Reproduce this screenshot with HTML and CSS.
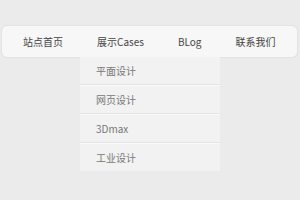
FILE: index.html
```html
<!DOCTYPE html>
<html lang="zh-CN">
<head>
    <meta charset="UTF-8">
    <title>导航菜单</title>
    <link rel="stylesheet" href="styles.css">
</head>
<body>
    <ul class="nav">
        <li><a href="#">站点首页</a></li>
        <li><a href="#">展示Cases</a></li>
        <li><a href="#">BLog</a></li>
        <li><a href="#">联系我们</a></li>
    </ul>
    <ul class="sub">
        <li><a href="#">平面设计</a></li>
        <li><a href="#">网页设计</a></li>
        <li><a href="#">3Dmax</a></li>
        <li><a href="#">工业设计</a></li>
    </ul>
</body>
</html>
```

FILE: styles.css
```css
body {
    margin: 0;
    padding: 26px 3px 0 2px;
    background-color: #ebebeb;
    font-family: "Noto Sans CJK SC", "Noto Sans", sans-serif;
    font-size: 10px;
}

ul {
    list-style: none;
    margin: 0;
    padding: 0;
}

.nav {
    display: flex;
    height: 31px;
    padding: 0 0 0 4px;
    background-color: #f7f7f7;
    border-radius: 5px;
    box-shadow: 0 0 2px rgba(0, 0, 0, 0.12);
}

    .nav li {
        flex: none;
    }

    .nav a {
        display: block;
        padding: 0 17px;
        line-height: 31px;
        white-space: nowrap;
        color: #444;
        text-decoration: none;
    }

/* submenu of 展示Cases, sits right under its tab */
.sub {
    width: 140px;
    margin-left: 78px;
    background-color: #f2f2f2;
}

    .sub li {
        border-top: 1px solid #fafafa;
        border-bottom: 1px solid #e4e4e4;
    }

    .sub li:first-child {
        border-top: none;
    }

    .sub li:last-child {
        border-bottom: none;
    }

    .sub a {
        display: block;
        padding-left: 16px;
        line-height: 27px;
        white-space: nowrap;
        color: #777;
        text-decoration: none;
    }
```
